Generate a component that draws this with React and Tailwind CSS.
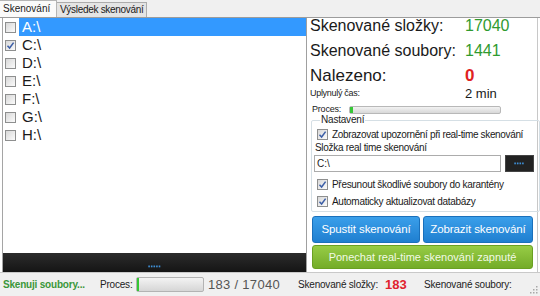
import React from "react";

const Check = ({ checked }) => (
  <span className="w-[11px] h-[11px] border border-[#8e8f8f] bg-linear-to-br from-[#d8d8d8] to-[#fbfbfb] flex items-center justify-center shrink-0">
    {checked && (
      <svg width="9" height="9" viewBox="0 0 9 9">
        <path d="M1.5 4.8 L3.6 7 L7.6 1.6" stroke="#3c5ea6" strokeWidth="1.5" fill="none" />
      </svg>
    )}
  </span>
);

const Dots = ({ n = 5 }) => (
  <svg width={n * 2.6} height="3" viewBox={`0 0 ${n * 2.6} 3`}>
    {Array.from({ length: n }).map((_, i) => (
      <rect key={i} x={i * 2.6 + 0.3} y="0.5" width="1.6" height="1.8" fill="#3f8fd6" />
    ))}
  </svg>
);

const drives = [
  { l: "A:\\", c: false, sel: true },
  { l: "C:\\", c: true },
  { l: "D:\\", c: false },
  { l: "E:\\", c: false },
  { l: "F:\\", c: false },
  { l: "G:\\", c: false },
  { l: "H:\\", c: false },
];

export default function App() {
  return (
    <div
      className="w-[540px] h-[296px] bg-[#f0f0f0] flex flex-col overflow-hidden text-[#1a1a1a] whitespace-nowrap"
      style={{ fontFamily: '"Liberation Sans", Arial, sans-serif' }}
    >
      {/* Tabs */}
      <div className="h-[17px] flex items-end shrink-0">
        <div className="h-[17px] w-[57px] bg-[#fafafa] border-t border-r border-[#b5b5b5] text-[10px] leading-[15px] pl-[3px]">
          Skenování
        </div>
        <div className="h-[15px] w-[90px] bg-[#e4e4e4] border-t border-r border-[#acacac] text-[10px] leading-[14px] pl-[3px] tracking-[-0.3px]">
          Výsledek skenování
        </div>
      </div>

      {/* Main */}
      <div className="h-[255px] shrink-0 flex bg-white border-t border-[#9c9c9c]">
        {/* Left panel */}
        <div className="w-[304px] ml-[2px] border-l border-[#a5a5a5] flex flex-col">
          <div className="flex-1 flex flex-col">
            {drives.map((d) => (
              <div key={d.l} className="h-[18px] flex items-center">
                <div className="ml-[2px]">
                  <Check checked={d.c} />
                </div>
                <div
                  className={
                    "ml-[3px] flex-1 h-[18px] flex items-center pl-[3px] text-[15px] " +
                    (d.sel ? "bg-[#3399ff] text-white" : "")
                  }
                >
                  {d.l}
                </div>
              </div>
            ))}
          </div>
          <div className="h-[19px] bg-linear-to-b from-[#2c2c2c] to-[#151515] flex items-end justify-center pb-[4px]">
            <Dots n={5} />
          </div>
        </div>

        {/* Right panel */}
        <div className="w-[232px] border-l border-[#a0a0a0] border-r border-r-[#c8c8c8] flex flex-col pl-[3px] pr-[3px]">
          <div className="h-[16px] leading-[16px] flex text-[16px]">
            <span className="w-[155px]">Skenované složky:</span>
            <span className="text-[#2f9a2f]">17040</span>
          </div>
          <div className="mt-[8px] h-[18px] leading-[18px] flex text-[16px]">
            <span className="w-[155px]">Skenované soubory:</span>
            <span className="text-[#2f9a2f]">1441</span>
          </div>
          <div className="mt-[7px] h-[18px] leading-[18px] flex text-[17px]">
            <span className="w-[155px]">Nalezeno:</span>
            <span className="text-[#e02222] font-bold">0</span>
          </div>
          <div className="mt-[2px] h-[14px] flex items-center">
            <span className="w-[155px] text-[9px] tracking-[-0.3px]">Uplynulý čas:</span>
            <span className="text-[13px]">2 min</span>
          </div>
          <div className="mt-[3px] h-[12px] flex items-center">
            <span className="w-[39px] text-[9px] tracking-[-0.2px] pl-[2px]">Proces:</span>
            <div className="w-[152px] h-[8px] rounded-[2px] border border-[#b8b8b8] bg-linear-to-b from-[#f2f2f2] to-[#d8d8d8] flex">
              <div className="w-[3px] h-full bg-[#37c737]" />
            </div>
          </div>

          <fieldset className="mt-[-3px] ml-[1px] border border-[#d5dfe5] rounded-[2px] px-[5px] pb-[2px]">
            <legend className="ml-[3px] px-[1px] text-[10px] leading-[14px] tracking-[-0.2px]">Nastavení</legend>
            <div className="h-[14px] flex items-center gap-[4px] text-[10px] tracking-[-0.35px]">
              <Check checked />
              <span>Zobrazovat upozornění při real-time skenování</span>
            </div>
            <div className="h-[13px] flex items-center text-[10px] tracking-[-0.3px] -ml-[2px]">Složka real time skenování</div>
            <div className="mt-[1px] h-[17px] flex gap-[4px] -ml-[3px]">
              <div className="w-[187px] h-[17px] border border-[#acacac] text-[10px] leading-[15px] pl-[2px]">C:\</div>
              <div className="w-[29px] h-[17px] bg-[#222] border border-[#444] flex items-center justify-center">
                <Dots n={4} />
              </div>
            </div>
            <div className="mt-[5px] h-[15px] flex items-center gap-[4px] text-[10px] tracking-[-0.3px]">
              <Check checked />
              <span>Přesunout škodlivé soubory do karantény</span>
            </div>
            <div className="mt-[2px] h-[15px] flex items-center gap-[4px] text-[10px] tracking-[-0.3px]">
              <Check checked />
              <span>Automaticky aktualizovat databázy</span>
            </div>
          </fieldset>

          <div className="mt-[4px] ml-[2px] flex gap-[3px]">
            <div className="w-[108px] h-[27px] rounded-[3px] bg-linear-to-b from-[#3a9fea] to-[#1f7fd0] border border-[#1a70bb] text-white text-[11.5px] tracking-[-0.1px] flex items-center justify-center">
              Spustit skenování
            </div>
            <div className="w-[110px] h-[27px] rounded-[3px] bg-linear-to-b from-[#3a9fea] to-[#1f7fd0] border border-[#1a70bb] text-white text-[11.5px] tracking-[-0.1px] flex items-center justify-center">
              Zobrazit skenování
            </div>
          </div>
          <div className="mt-[2px] ml-[2px] w-[221px] h-[24px] rounded-[3px] bg-linear-to-b from-[#97cc45] to-[#74ac28] border border-[#6aa022] text-[#f2fae6] text-[11px] flex items-center justify-center">
            Ponechat real-time skenování zapnuté
          </div>
        </div>
      </div>

      {/* Status bar */}
      <div className="flex-1 border-t border-[#c9c9c9] bg-[#f0f0f0] flex items-center text-[10px] relative">
        <span className="ml-[3px] w-[97px] font-bold text-[#3a973a] tracking-[-0.2px]">Skenuji soubory...</span>
        <span className="w-[36px] text-[#222] tracking-[-0.2px]">Proces:</span>
        <div className="w-[68px] h-[15px] rounded-[2px] border border-[#b3b3b3] bg-linear-to-b from-[#f3f3f3] to-[#d6d6d6] flex">
          <div className="w-[2px] h-full bg-[#35c735]" />
        </div>
        <span className="ml-[4px] w-[90px] text-[13px] text-[#555] tracking-[0.3px]">183 / 17040</span>
        <span className="w-[87px] text-[#222] tracking-[-0.2px]">Skenované složky:</span>
        <span className="w-[39px] text-[13px] font-bold text-[#e0222e]">183</span>
        <span className="text-[#222] tracking-[-0.2px]">Skenované soubory:</span>
        <svg className="absolute right-[2px] bottom-[2px]" width="10" height="10" viewBox="0 0 10 10">
          <g fill="#a8a8a8">
            <rect x="8" y="2" width="1.5" height="1.5" />
            <rect x="5" y="5" width="1.5" height="1.5" />
            <rect x="8" y="5" width="1.5" height="1.5" />
            <rect x="2" y="8" width="1.5" height="1.5" />
            <rect x="5" y="8" width="1.5" height="1.5" />
            <rect x="8" y="8" width="1.5" height="1.5" />
          </g>
        </svg>
      </div>
    </div>
  );
}
